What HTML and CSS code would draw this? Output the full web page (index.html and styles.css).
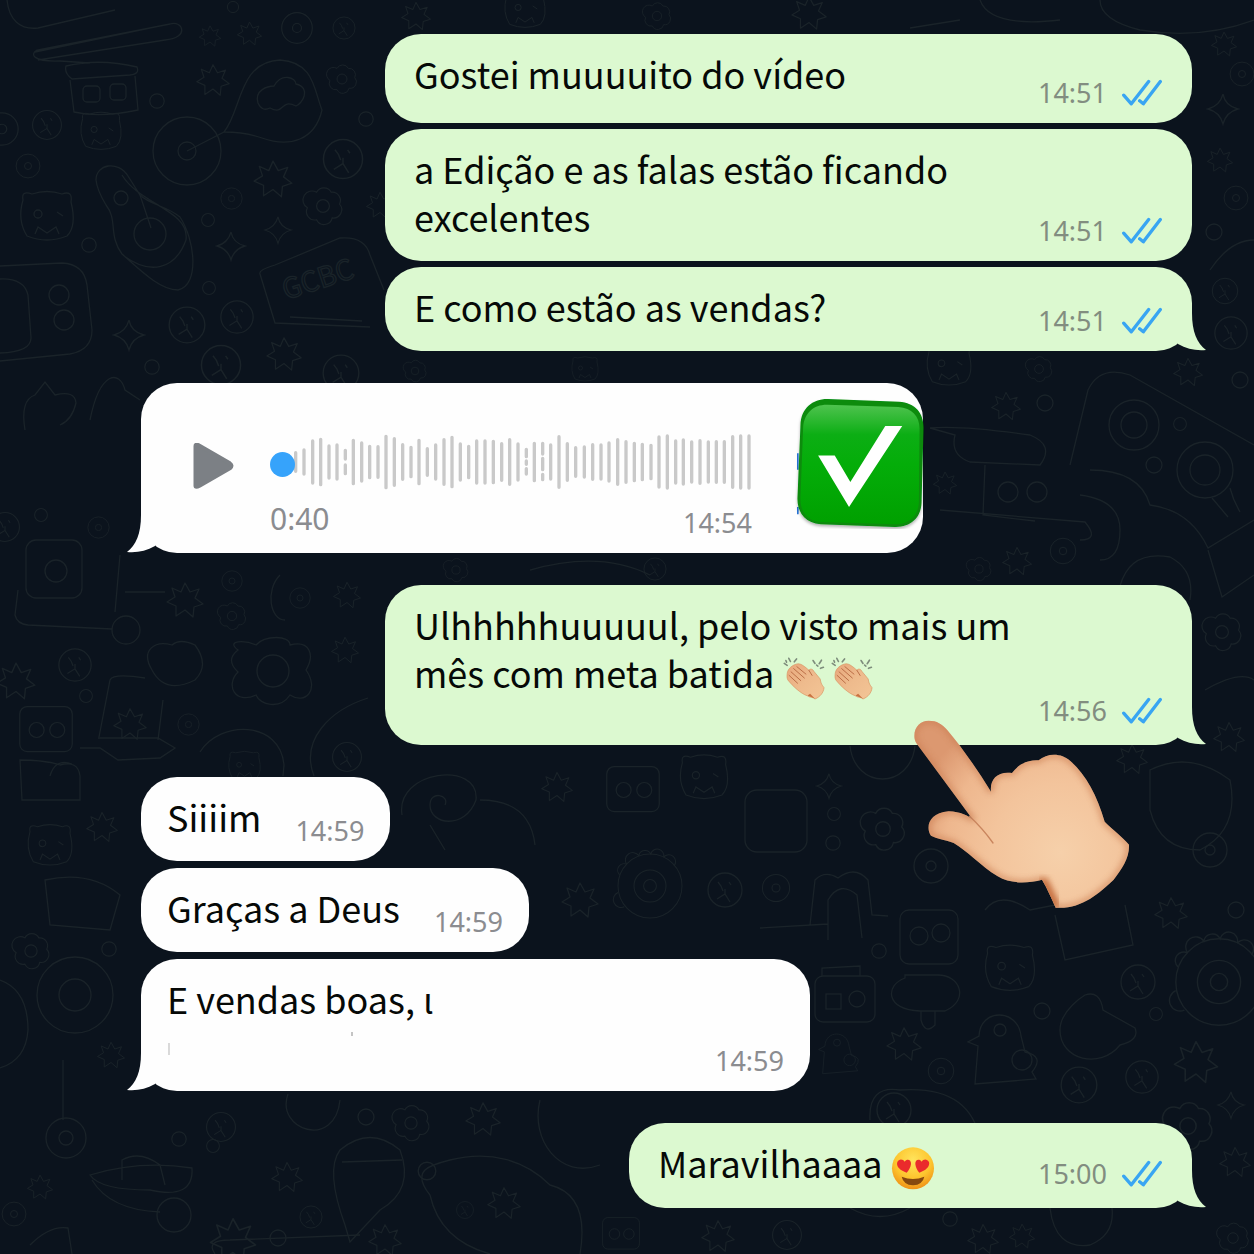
FILE: index.html
```html
<!DOCTYPE html>
<html lang="pt-BR">
<head>
<meta charset="utf-8">
<meta name="viewport" content="width=device-width, initial-scale=1">
<title>Conversa</title>
<link rel="stylesheet" href="styles.css">
</head>
<body>
<svg class="defs" width="0" height="0" aria-hidden="true">
  <defs>
    <symbol id="ticks" viewBox="488 174 120 80"><path d="M493 222L516 248L568 181M541 239L552 248L603 181" fill="none" stroke="#39a5f2" stroke-width="10" stroke-linecap="round" stroke-linejoin="round"/></symbol>
    <symbol id="tail" viewBox="-36 -38 50 38"><path d="M0-38C0-19 5-8 14-1C4 0-5-2-14-7V-38Z" fill="currentColor"/></symbol>
    <linearGradient id="skin" x1="0" y1="0" x2="1" y2="1"><stop offset="0" stop-color="#e8a77c"/><stop offset=".5" stop-color="#eebb8d"/><stop offset="1" stop-color="#f3c596"/></linearGradient>
    <symbol id="clap" viewBox="65 44 130 136">
      <path d="M78 98C80 82 96 70 112 68C122 68 134 78 145 88C150 82 157 84 161 92L180 115C182 124 182 130 192 142C190 158 180 170 164 177C158 170 150 174 140 167C120 160 96 138 80 118C76 110 78 104 78 98Z" fill="url(#skin)" stroke="#d8925f" stroke-width="2"/>
      <path d="M84 104L110 128M90 93L120 120M98 83L131 112M108 77L136 100M145 88L155 104" fill="none" stroke="#b96c45" stroke-width="3" stroke-linecap="round"/>
      <path d="M141 166L149 161L164 176Z" fill="#c9713f"/>
      <path d="M69 67L78 73M83 51L88 61M107 53L100 62M158 58L164 67M184 57L177 68M190 79L181 82M169 72L173 75M74 58L76 63" fill="none" stroke="#7e8d7c" stroke-width="5" stroke-linecap="round"/>
    </symbol>
    <symbol id="d-ring" viewBox="-10 -10 20 20"><circle r="8"/></symbol>
    <symbol id="d-eye" viewBox="-20 -20 40 40"><circle r="17"/><circle r="5"/></symbol>
    <symbol id="d-ball" viewBox="-20 -20 40 40"><circle r="17"/><path d="M-7-8l3 4 2 5M4-8l2 3M-8 9l8-5 5 8M0-1v5"/></symbol>
    <symbol id="d-spark" viewBox="-16 -16 32 32"><path d="M0-14Q2-3 14 0Q3 3 0 14Q-3 3-14 0Q-3-3 0-14Z"/></symbol>
    <symbol id="d-star" viewBox="-20 -20 40 40"><path d="M0-17L5-8L14-11L10-2L18 4L9 7L8 17L0 10L-9 16L-9 6L-18 2L-10-3L-13-12L-4-8Z" stroke-linejoin="round"/></symbol>
    <symbol id="d-cloud" viewBox="-24 -24 48 48"><path d="M-7-15A9 9 0 0 1 9-15A9 9 0 0 1 18-2A9 9 0 0 1 10 13A9 9 0 0 1-7 15A9 9 0 0 1-17 2A9 9 0 0 1-7-15Z"/><circle r="7"/></symbol>
    <symbol id="d-bot" viewBox="-32 -32 64 64"><rect x="-28" y="-25" width="56" height="48" rx="8"/><circle cx="-10" r="8"/><circle cx="12" r="8"/></symbol>
    <symbol id="d-cat" viewBox="-30 -30 60 60"><path d="M-24-16Q-26-26-15-22Q0-27 15-22Q26-26 24-14Q30 10 20 20Q0 28-20 20Q-30 4-24-16Z"/><circle cx="-9" cy="-2" r="4"/><path d="M10-4l6 4M-12 18l3-7 9 6 9-6 3 7"/></symbol>
    <symbol id="d-ghost" viewBox="-36 -40 72 80"><path d="M-25 36L-22-2L-32-6L-21-12C-20-40 18-40 21-12L25 4Q45 8 32 24L36 31Z"/><circle cx="0" cy="-18" r="6"/><circle cx="22" cy="12" r="10"/></symbol>
    <symbol id="d-gear" viewBox="-50 -50 100 100"><circle r="40"/><circle r="20"/><circle r="8"/><path d="M-38-14a8 8 0 0 1 9-13a8 8 0 0 1 15-11a8 8 0 0 1 15-2a8 8 0 0 1 16 4a8 8 0 0 1 13 11M-40 8a8 8 0 0 0 8 18"/></symbol>
  </defs>
</svg>

<main class="chat">
  <svg class="wallpaper" viewBox="0 0 1254 1254" preserveAspectRatio="xMidYMid slice" aria-hidden="true">
    <path d="M7 0C9 20 20 30 38 28L115 10M35 52L150 28M38 60L165 40C190 38 183 20 170 24L37 50C30 54 32 62 60 61L90 63M66 66Q100 58 137 67Q140 74 130 75L72 79Q64 73 66 66ZM70 80L74 112Q100 118 138 110L135 76"/>
    <rect x="83" y="86" width="17" height="16" rx="4"/><rect x="110" y="84" width="16" height="16" rx="4"/>
    <circle cx="187" cy="151" r="34"/><circle cx="187" cy="151" r="9"/><path d="M187 151L224 132C242 110 238 62 280 60C314 62 314 90 322 110C315 140 290 148 262 138Q245 132 224 132"/>
    <path d="M258 103C254 90 268 86 274 86C282 72 296 78 296 84C312 88 302 104 296 106C280 98 285 116 270 108Q262 112 258 103Z"/>
    <path d="M96 180C96 164 118 160 128 176L140 195C150 205 165 205 180 217C195 240 200 285 178 290C160 290 140 270 122 254C108 235 118 220 106 205Q97 190 96 180ZM122 175C140 205 190 210 186 240C175 270 150 275 124 256"/><circle cx="150" cy="234" r="16"/><circle cx="121" cy="198" r="7"/><path d="M140 195L151 228"/>
    <path d="M0 266L62 263Q84 264 87 285L92 330Q92 350 70 354L0 361M0 279Q24 278 28 295L31 338Q31 352 0 353"/><circle cx="59" cy="295" r="10"/><circle cx="64" cy="320" r="10"/>
    <path d="M260 274Q258 270 275 265L340 238Q365 236 370 255L384 290M260 274L275 323L370 327M290 317L362 321"/>
    <text x="286" y="300" transform="rotate(-18 286 300)">GCBC</text>
    <path d="M25 430Q20 400 35 395L45 382L55 395Q75 390 76 403Q72 420 60 425M90 420C100 370 120 370 125 390L140 400"/>
    <rect x="26" y="540" width="56" height="58" rx="10"/><circle cx="56" cy="571" r="11"/><path d="M18 590L15 615Q17 624 28 625L112 629M120 555L115 612M125 592L165 592"/><circle cx="126" cy="630" r="14"/>
    <path d="M152 670C140 650 155 640 172 645Q180 638 195 645Q210 665 195 680Q165 695 152 670ZM99 737L110 680Q113 673 145 678M163 700L158 740M80 748L100 748L118 760L160 758L175 748L158 738L98 738"/>
    <path d="M238 650C225 640 245 640 256 645C265 635 290 635 290 645C310 640 315 655 306 670C320 690 305 705 290 695C280 710 260 705 256 695C235 705 225 685 238 672Q225 660 238 650Z"/><circle cx="273" cy="671" r="16"/>
    <path d="M200 752C220 720 280 720 284 765L283 776M368 698C330 710 300 740 314 776"/><path d="M280 575C265 590 270 620 285 620"/>
    <path d="M402 815C395 770 480 760 476 800C465 830 430 825 430 805C430 790 450 795 445 805M430 825L445 850M480 800Q530 800 535 845"/>
    <path d="M20 760Q45 760 60 765Q78 760 80 776L80 800H22ZM50 776q5-18 22-12M45 880Q90 870 120 895L110 930L50 925Z"/>
    <path d="M0 980Q28 990 28 1030Q26 1060 0 1068"/><circle cx="75" cy="995" r="38"/><circle cx="75" cy="995" r="16"/>
    <path d="M63 1060V1120"/><circle cx="66" cy="1138" r="20"/><circle cx="66" cy="1138" r="7"/><path d="M90 1175Q140 1160 192 1168Q194 1200 150 1190Q100 1190 90 1175ZM92 1180Q110 1210 160 1212M122 1180V1160Q140 1150 160 1165L165 1185"/>
    <circle cx="174" cy="1215" r="17"/><path d="M350 1242L345 1225Q325 1170 340 1150Q370 1125 400 1150Q415 1190 380 1210ZM342 1162L402 1160"/><path d="M430 1195C410 1170 430 1165 450 1160C490 1150 525 1160 550 1185Q590 1195 580 1254M430 1195Q440 1240 490 1254M540 1100C530 1140 560 1180 600 1165"/>
    <path d="M215 1254Q205 1240 230 1240L360 1235M30 1245Q50 1225 68 1228L72 1254M288 1094C275 1130 335 1150 340 1100"/>
    <path d="M930 428Q960 425 1030 435Q1055 445 1040 465L970 462Q950 455 955 435ZM985 465L983 515L1035 521M940 510L1085 522Q1100 540 1080 540"/><circle cx="1008" cy="492" r="10"/><circle cx="1037" cy="492" r="10"/>
    <path d="M1070 465L1088 390Q1100 365 1130 375L1254 445M1090 470Q1140 470 1150 505Q1190 510 1208 548L1254 520M1080 495Q1120 500 1120 530Q1120 560 1100 560M1208 550L1222 597L1254 575"/>
    <circle cx="1134" cy="425" r="25"/><circle cx="1134" cy="425" r="13"/><circle cx="1205" cy="470" r="28"/><circle cx="1205" cy="470" r="15"/><path d="M1212 498L1228 517M1230 488Q1233 500 1240 512M1120 586Q1130 550 1170 557Q1195 570 1190 600"/>
    <path d="M850 746C855 790 910 790 915 746"/><rect x="745" y="790" width="62" height="62" rx="12"/><path d="M810 925L815 880Q825 870 838 878Q855 865 868 880L872 915L888 916M828 940V900Q840 880 857 895L862 938M760 928L828 924"/>
    <rect x="900" y="910" width="58" height="54" rx="9"/><circle cx="919" cy="936" r="9"/><circle cx="941" cy="933" r="9"/>
    <path d="M985 910Q1000 890 1030 910L1055 905M1055 915L1065 960L1133 945L1125 905"/><rect x="815" y="976" width="60" height="46" rx="8"/><rect x="826" y="994" width="15" height="15"/><circle cx="857" cy="999" r="8"/><path d="M822 976V968L860 966V976"/>
    <path d="M905 978C885 985 885 1010 920 1011H945C970 1000 960 975 938 975H905ZM921 1011V1020Q925 1035 935 1025V1011M1060 1030C1060 1010 1085 995 1085 995Q1100 990 1103 1010L1135 1028Q1140 1040 1120 1045C1100 1070 1060 1060 1060 1030Z"/>
    <path d="M980 1140Q970 1085 900 1090Q868 1085 870 1120M850 1208Q880 1225 910 1208M1050 1208Q1055 1250 1090 1245Q1115 1235 1112 1208M1100 0Q1100 20 1140 30Q1200 40 1254 20M980 0Q990 28 1060 20M960 20L910 28"/>
    <path d="M1210 270Q1230 240 1254 240M1205 690Q1240 670 1254 680M1150 770Q1190 750 1230 780Q1240 830 1200 850Q1160 850 1150 810ZM530 570Q600 550 650 575"/>
    <g>
      <use href="#d-ring" x="222" y="0" width="22" height="14"/><use href="#d-star" x="195" y="62" width="36" height="36"/><use href="#d-star" x="236" y="20" width="27" height="27"/><use href="#d-star" x="198" y="24" width="24" height="24"/><use href="#d-eye" x="279" y="10" width="36" height="36"/><use href="#d-ball" x="331" y="15" width="26" height="26"/><use href="#d-ring" x="148" y="92" width="18" height="18"/><use href="#d-ball" x="30" y="108" width="34" height="34"/><use href="#d-eye" x="-17" y="110" width="38" height="38"/><use href="#d-cat" x="76" y="108" width="50" height="46"/><use href="#d-eye" x="14" y="152" width="28" height="28"/><use href="#d-cat" x="15" y="186" width="64" height="60"/><use href="#d-ring" x="80" y="236" width="18" height="18"/>
      <use href="#d-star" x="252" y="158" width="42" height="42"/><use href="#d-ball" x="320" y="136" width="46" height="46"/><use href="#d-eye" x="219" y="186" width="25" height="25"/><use href="#d-cloud" x="300" y="184" width="46" height="44"/><use href="#d-spark" x="213" y="230" width="36" height="32"/><use href="#d-spark" x="263" y="215" width="30" height="30"/><use href="#d-ring" x="200" y="212" width="16" height="16"/><use href="#d-cloud" x="325" y="62" width="34" height="34"/><use href="#d-ring" x="357" y="110" width="18" height="18"/><use href="#d-star" x="365" y="190" width="30" height="30"/>
      <use href="#d-ball" x="166" y="304" width="42" height="42"/><use href="#d-ball" x="218" y="298" width="38" height="38"/><use href="#d-spark" x="112" y="318" width="34" height="34"/><use href="#d-ball" x="198" y="342" width="46" height="46"/><use href="#d-star" x="265" y="335" width="38" height="38"/><use href="#d-ball" x="320" y="352" width="42" height="42"/><use href="#d-ring" x="143" y="358" width="18" height="18"/><use href="#d-ring" x="201" y="280" width="16" height="16"/>
      <use href="#d-ring" x="33" y="507" width="16" height="16"/><use href="#d-ball" x="-12" y="505" width="34" height="44"/><use href="#d-eye" x="86" y="515" width="25" height="25"/><use href="#d-star" x="164" y="580" width="42" height="40"/><use href="#d-eye" x="220" y="569" width="24" height="24"/><use href="#d-cloud" x="215" y="600" width="34" height="32"/><use href="#d-eye" x="288" y="586" width="24" height="24"/><use href="#d-star" x="330" y="580" width="34" height="30"/><use href="#d-star" x="330" y="635" width="30" height="30"/><use href="#d-ball" x="56" y="646" width="38" height="38"/><use href="#d-star" x="-5" y="660" width="42" height="42"/><use href="#d-ring" x="78" y="688" width="16" height="16"/><use href="#d-bot" x="10" y="700" width="72" height="60"/><use href="#d-star" x="112" y="706" width="36" height="36"/><use href="#d-eye" x="176" y="712" width="25" height="25"/><use href="#d-cat" x="222" y="748" width="45" height="36"/><use href="#d-ball" x="330" y="740" width="34" height="34"/>
      <use href="#d-cat" x="20" y="820" width="60" height="50"/><use href="#d-star" x="85" y="810" width="34" height="34"/><use href="#d-cloud" x="10" y="930" width="42" height="42"/><use href="#d-ring" x="100" y="940" width="18" height="18"/><use href="#d-star" x="96" y="1040" width="30" height="30"/><use href="#d-star" x="26" y="1170" width="28" height="34"/><use href="#d-ball" x="204" y="1110" width="34" height="34"/><use href="#d-ring" x="170" y="1130" width="18" height="18"/><use href="#d-ring" x="205" y="1138" width="16" height="16"/><use href="#d-cloud" x="390" y="1102" width="42" height="42"/><use href="#d-star" x="464" y="1100" width="38" height="38"/><use href="#d-star" x="270" y="1158" width="34" height="38"/><use href="#d-ball" x="298" y="1204" width="26" height="26"/><use href="#d-star" x="208" y="1215" width="50" height="50"/><use href="#d-ring" x="416" y="1160" width="22" height="22"/><use href="#d-ring" x="268" y="1228" width="20" height="20"/><use href="#d-ring" x="356" y="1106" width="20" height="22"/><use href="#d-star" x="486" y="1185" width="36" height="36"/><use href="#d-ball" x="455" y="1200" width="20" height="20"/><use href="#d-star" x="360" y="1222" width="50" height="36"/><use href="#d-bot" x="600" y="1212" width="42" height="44"/><use href="#d-eye" x="0" y="1195" width="28" height="38"/>
      <use href="#d-cloud" x="395" y="358" width="40" height="26"/><use href="#d-cat" x="560" y="354" width="50" height="30"/><use href="#d-cat" x="920" y="340" width="58" height="50"/><use href="#d-cloud" x="1022" y="354" width="34" height="30"/><use href="#d-star" x="990" y="390" width="32" height="32"/><use href="#d-ring" x="1035" y="393" width="20" height="20"/><use href="#d-star" x="1172" y="356" width="32" height="32"/><use href="#d-ring" x="1230" y="370" width="20" height="20"/><use href="#d-ring" x="1144" y="455" width="20" height="20"/><use href="#d-ring" x="1172" y="416" width="16" height="16"/><use href="#d-star" x="932" y="470" width="26" height="26"/><use href="#d-eye" x="1048" y="536" width="30" height="30"/><use href="#d-star" x="1000" y="545" width="34" height="32"/><use href="#d-cloud" x="960" y="555" width="38" height="28"/><use href="#d-cloud" x="430" y="556" width="52" height="28"/><use href="#d-ball" x="640" y="556" width="30" height="26"/>
      <use href="#d-star" x="1210" y="30" width="28" height="28"/><use href="#d-eye" x="1228" y="60" width="28" height="28"/><use href="#d-spark" x="1206" y="92" width="34" height="34"/><use href="#d-star" x="1206" y="146" width="28" height="28"/><use href="#d-eye" x="1222" y="184" width="28" height="28"/><use href="#d-ring" x="1204" y="222" width="20" height="20"/><use href="#d-ball" x="1210" y="276" width="30" height="30"/><use href="#d-ball" x="1212" y="314" width="38" height="38"/><use href="#d-star" x="400" y="0" width="32" height="32"/><use href="#d-cat" x="500" y="-14" width="50" height="46"/><use href="#d-cloud" x="640" y="0" width="34" height="32"/><use href="#d-star" x="790" y="-6" width="38" height="38"/>
      <use href="#d-cloud" x="1200" y="610" width="44" height="44"/><use href="#d-star" x="1212" y="720" width="34" height="34"/><use href="#d-spark" x="814" y="772" width="30" height="28"/><use href="#d-cloud" x="858" y="804" width="50" height="50"/><use href="#d-ring" x="826" y="806" width="16" height="16"/><use href="#d-ring" x="824" y="834" width="18" height="18"/><use href="#d-eye" x="911" y="846" width="40" height="40"/><use href="#d-star" x="540" y="770" width="34" height="34"/><use href="#d-bot" x="600" y="760" width="66" height="60"/><use href="#d-cat" x="675" y="750" width="58" height="54"/><use href="#d-star" x="560" y="880" width="40" height="40"/><use href="#d-gear" x="610" y="846" width="80" height="80"/><use href="#d-ball" x="705" y="870" width="40" height="40"/><use href="#d-eye" x="760" y="872" width="32" height="32"/><use href="#d-star" x="1115" y="740" width="34" height="38"/><use href="#d-eye" x="1190" y="830" width="40" height="40"/>
      <use href="#d-star" x="1153" y="895" width="36" height="36"/><use href="#d-ring" x="1226" y="900" width="20" height="20"/><use href="#d-cat" x="980" y="940" width="60" height="56"/><use href="#d-ball" x="1118" y="962" width="40" height="40"/><use href="#d-gear" x="1165" y="928" width="108" height="108"/><use href="#d-ring" x="870" y="942" width="18" height="18"/><use href="#d-ring" x="1032" y="1001" width="20" height="20"/><use href="#d-ring" x="1148" y="1006" width="16" height="16"/><use href="#d-star" x="885" y="1025" width="38" height="38"/><use href="#d-ghost" x="960" y="1008" width="80" height="80"/><use href="#d-eye" x="926" y="1056" width="30" height="30"/><use href="#d-ball" x="1058" y="1064" width="42" height="42"/><use href="#d-ball" x="1122" y="1058" width="40" height="38"/><use href="#d-star" x="1172" y="1038" width="48" height="48"/><use href="#d-spark" x="1216" y="1090" width="30" height="30"/><use href="#d-cloud" x="1160" y="1098" width="56" height="56"/><use href="#d-ghost" x="812" y="1030" width="50" height="46"/><use href="#d-ball" x="870" y="1090" width="48" height="40"/><use href="#d-star" x="1218" y="1145" width="34" height="34"/><use href="#d-star" x="965" y="1222" width="36" height="34"/><use href="#d-star" x="1008" y="1222" width="28" height="28"/><use href="#d-cloud" x="1215" y="1220" width="36" height="36"/><use href="#d-ring" x="940" y="1210" width="20" height="18"/><use href="#d-star" x="700" y="1218" width="36" height="36"/><use href="#d-ball" x="770" y="1218" width="34" height="34"/>
    </g>
  </svg>

  <section class="group">
    <article class="bubble sent wide roomy"><p class="text">Gostei muuuuito do vídeo</p><div class="meta"><time>14:51</time><svg class="ticks" role="img" aria-label="Lida"><use href="#ticks"/></svg></div></article>
    <article class="bubble sent wide"><p class="text">a Edição e as falas estão ficando excelentes</p><div class="meta"><time>14:51</time><svg class="ticks" role="img" aria-label="Lida"><use href="#ticks"/></svg></div></article>
    <article class="bubble sent wide"><p class="text">E como estão as vendas?</p><div class="meta"><time>14:51</time><svg class="ticks" role="img" aria-label="Lida"><use href="#ticks"/></svg></div><svg class="tail"><use href="#tail"/></svg></article>
  </section>

  <section class="group">
    <article class="bubble received voice">
      <button class="play" type="button" aria-label="Reproduzir"><svg viewBox="218 220 122 138"><path d="M225 229V348Q225 354 237 348L328 296Q338 288 328 281L237 228Q225 222 225 229Z" fill="#7c8085" stroke="#7c8085" stroke-width="12" stroke-linejoin="round"/></svg></button>
      <div class="player">
        <div class="track">
          <svg class="wave" viewBox="450 192 1446 174" aria-hidden="true"><path d="M527 251v56M552 243v72M578 216v126M602 211v136M627 231v96M651 228v102M676 244v26M676 288v26M700 214v130M725 222v114M749 232v94M774 233v92M798 202v154M823 209v140M848 227v104M873 235v88M897 214v130M922 239v80M947 228v102M972 212v134M996 205v148M1021 225v108M1046 232v94M1070 216v126M1095 216v126M1120 217v124M1145 224v110M1169 212v134M1194 225v108M1219 241v22M1219 276v10M1219 299v16M1243 223v112M1268 223v32M1268 268v34M1268 316v16M1292 228v102M1317 203v152M1342 224v110M1367 236v86M1393 234v90M1418 227v104M1443 228v102M1467 222v114M1493 212v134M1518 218v122M1543 223v112M1567 226v106M1593 229v100M1617 204v150M1642 201v156M1667 216v126M1690 213v132M1715 219v120M1740 215v128M1765 219v120M1789 218v122M1813 218v122M1838 203v152M1862 201v156M1887 201v156" fill="none" stroke="#c9c9c9" stroke-width="10" stroke-linecap="round"/></svg>
          <input class="seek" type="range" min="0" max="40" value="0" aria-label="Posição do áudio">
        </div>
        <div class="times"><span class="duration">0:40</span><time>14:54</time></div>
      </div>
      <svg class="check" viewBox="828 84 390 394" role="img" aria-label="Feito">
        <defs><linearGradient id="g" x1="0" y1="0" x2="0" y2="1"><stop offset="0" stop-color="#4fc34f"/><stop offset=".25" stop-color="#0cae14"/><stop offset=".5" stop-color="#04ad09"/><stop offset="1" stop-color="#00a000"/></linearGradient><filter id="sh" x="-10%" y="-10%" width="120%" height="125%"><feDropShadow dx="0" dy="6" stdDeviation="4" flood-opacity=".3"/></filter></defs>
        <path d="M836 250V300M836 412V434" stroke="#2674d8" stroke-width="5"/>
        <path d="M844 165C846 115 880 87 925 87L1140 95C1190 98 1215 130 1214 175L1208 400C1206 445 1175 472 1130 472L905 464C860 460 834 430 835 385Z" fill="#078b0c" filter="url(#sh)"/>
        <path d="M852 172C855 128 885 103 925 104L1138 111C1180 114 1203 140 1202 178L1200 398C1198 440 1170 464 1130 464L905 457C866 454 843 428 844 385Z" fill="url(#g)"/>
        <path d="M897 257H947L994 337L1099 168H1150L990 412Z" fill="#fff"/>
      </svg>
      <svg class="tail"><use href="#tail"/></svg>
    </article>
  </section>

  <section class="group front">
    <article class="bubble sent wide tall"><p class="text">Ulhhhhhuuuuul, pelo visto mais um mês com meta batida <span class="emojis" role="img" aria-label="palmas palmas"><svg class="emoji"><use href="#clap"/></svg><svg class="emoji"><use href="#clap"/></svg></span></p><div class="meta"><time>14:56</time><svg class="ticks" role="img" aria-label="Lida"><use href="#ticks"/></svg></div><svg class="tail"><use href="#tail"/></svg>
      <svg class="hand" viewBox="455 240 660 576" aria-hidden="true">
        <defs>
          <radialGradient id="palm" gradientUnits="userSpaceOnUse" cx="900" cy="640" r="460"><stop offset="0" stop-color="#f6d0aa"/><stop offset=".45" stop-color="#f3c49c"/><stop offset=".75" stop-color="#eeb78e"/><stop offset="1" stop-color="#dc9870"/></radialGradient>
          <filter id="soft" x="-20%" y="-20%" width="140%" height="140%"><feGaussianBlur stdDeviation="10"/></filter>
          <clipPath id="handclip"><path id="handshape" d="M462 290C462 262 482 245 505 245C530 245 545 255 560 272C605 325 650 390 692 458C688 422 710 396 755 402C775 374 805 362 835 364C860 342 902 340 930 366C975 405 1010 468 1033 548C1060 575 1085 592 1106 617C1108 655 1085 690 1060 722C1015 765 960 812 886 806C872 775 862 750 845 722C800 734 750 735 712 712C660 680 620 635 580 612C550 600 530 600 512 590C495 565 505 522 565 517C600 518 625 530 640 545L472 318C463 305 462 298 462 290Z"/></clipPath>
        </defs>
        <use href="#handshape" fill="url(#palm)"/>
        <g clip-path="url(#handclip)"><use href="#handshape" fill="none" stroke="#c97b50" stroke-width="14" filter="url(#soft)" opacity=".75"/><path d="M845 722L886 806" stroke="#c87243" stroke-width="30" filter="url(#soft)"/></g>
        <path d="M628 532Q668 570 698 612" fill="none" stroke="#c9855e" stroke-width="4" stroke-linecap="round"/>
      </svg>
    </article>
  </section>

  <section class="group loose">
    <article class="bubble received"><p class="text">Siiiim</p><div class="meta"><time>14:59</time></div></article>
    <article class="bubble received"><p class="text">Graças a Deus</p><div class="meta"><time>14:59</time></div></article>
    <article class="bubble received medium"><p class="text">E vendas boas, ι<svg class="specks" viewBox="0 0 188 48" aria-hidden="true"><path d="M2 21V33" stroke="#b5b5b5"/><path d="M185 10V14" stroke="#c4c4c4" stroke-width="2"/></svg></p><div class="meta"><time>14:59</time></div><svg class="tail"><use href="#tail"/></svg></article>
  </section>

  <section class="group">
    <article class="bubble sent short"><p class="text">Maravilhaaaa <span class="emojis"><svg class="emoji" viewBox="144 130 130 132" role="img" aria-label="olhos de coração">
      <defs><radialGradient id="face" cx=".5" cy=".3" r=".72"><stop offset="0" stop-color="#ffe45c"/><stop offset=".6" stop-color="#fdc52e"/><stop offset="1" stop-color="#ee8d16"/></radialGradient></defs>
      <circle cx="209" cy="197" r="63" fill="url(#face)"/><path d="M175 222Q209 236 243 222Q238 246 209 248Q180 246 175 222Z" fill="#85480f"/>
      <path d="M190 210C172 204 157 192 162 178C166 168 179 168 184 177C191 167 204 171 203 184C202 194 196 204 190 210Z" fill="#ea2b2c"/><path d="M228 210C246 204 261 192 257 178C252 168 240 168 235 177C228 167 215 171 216 184C217 194 222 204 228 210Z" fill="#ea2b2c"/>
    </svg></span></p><div class="meta"><time>15:00</time><svg class="ticks" role="img" aria-label="Lida"><use href="#ticks"/></svg></div><svg class="tail"><use href="#tail"/></svg></article>
  </section>
</main>
</body>
</html>
```
FILE: styles.css
```css
* {
  box-sizing: border-box;
}

body {
  margin: 0;
  background: #0b131d;
  color: #060907;
  font-family: "Noto Sans CJK SC", "Noto Sans", sans-serif;
}

.defs {
  position: absolute;
}

.chat {
  position: relative;
  display: flex;
  flex-direction: column;
  gap: 32px;
  min-height: 100vh;
  padding: 34px 62px 40px 141px;
  overflow: hidden;
}

.wallpaper {
  position: absolute;
  inset: 0;
  width: 100%;
  height: 100%;
  fill: none;
  stroke: #1a2329;
  stroke-width: 1.3;
}

.wallpaper text {
  font-size: 28px;
}

.group {
  position: relative;
  display: flex;
  flex-direction: column;
  gap: 6px;
}

.loose {
  gap: 7px;
}

/* the pointing hand hangs over the messages that follow it */
.front {
  z-index: 1;
}

.bubble {
  position: relative;
  display: flex;
  align-items: flex-end;
  justify-content: space-between;
  gap: 34px;
  max-width: 100%;
  padding: 15px 26px 16px;
  border-radius: 36px;
}

.sent {
  align-self: flex-end;
  gap: 10px;
  padding: 15px 30px 16px 29px;
  background: #dcf9d0;
}

.received {
  align-self: flex-start;
  background: #fefefe;
}

.wide {
  width: 807px;
}

.medium {
  width: 669px;
}

.short {
  width: 563px;
  padding-bottom: 20px;
}

.tall {
  min-height: 160px;
  padding-bottom: 20px;
}

.tall .text {
  align-self: flex-start;
}

.text {
  margin: 0 0 5px;
  font-size: 36px;
  line-height: 48px;
}

.roomy .text {
  margin-bottom: 10px;
}

.short .text {
  margin-bottom: 2px;
}

.emojis {
  display: inline-flex;
  gap: 4px;
  height: 44px;
  margin: -6px 0;
  vertical-align: middle;
}

.emoji {
  width: 44px;
  height: 44px;
}

.specks {
  display: block;
  width: 188px;
  height: 48px;
}

.meta {
  display: flex;
  flex: none;
  gap: 15px;
  height: 28px;
}

time,
.duration {
  color: #828d80;
  font-family: "Noto Sans", sans-serif;
  font-size: 27px;
  line-height: 28px;
}

.received time,
.duration {
  color: #8b8c90;
}

.ticks {
  width: 40px;
  height: 27px;
}

.tail {
  position: absolute;
  right: -14px;
  bottom: 0;
  width: 50px;
  height: 38px;
  color: #dcf9d0;
}

.received .tail {
  right: auto;
  left: -14px;
  color: #fefefe;
  transform: scaleX(-1);
}

.voice {
  align-items: flex-start;
  gap: 0;
  width: 782px;
  min-height: 170px;
  padding: 0 0 0 52px;
}

.play {
  width: 41px;
  height: 46px;
  margin: 60px 36px 0 0;
  padding: 0;
  border: 0;
  background: none;
}

.play svg {
  display: block;
  width: 100%;
  height: 100%;
}

.player {
  flex: 1;
  margin: 50px 43px 0 0;
}

.track {
  display: grid;
}

.wave,
.seek {
  grid-area: 1 / 1;
  width: 100%;
}

.wave {
  height: 58px;
}

.seek {
  position: relative;
  height: 62px;
  margin: 0;
  appearance: none;
  background: transparent;
}

.seek::-webkit-slider-thumb {
  width: 25px;
  height: 25px;
  border-radius: 50%;
  appearance: none;
  background: #36a3fb;
}

.times {
  display: flex;
  align-items: flex-start;
  justify-content: space-between;
  padding-top: 8px;
}

.duration {
  font-size: 30px;
  line-height: 32px;
}

.voice time {
  line-height: 40px;
}

.check {
  flex: none;
  width: 130px;
  height: 131px;
  margin: 15px -2px 0 0;
}

.hand {
  position: absolute;
  top: 134px;
  right: 60px;
  width: 220px;
  height: 192px;
}
```
